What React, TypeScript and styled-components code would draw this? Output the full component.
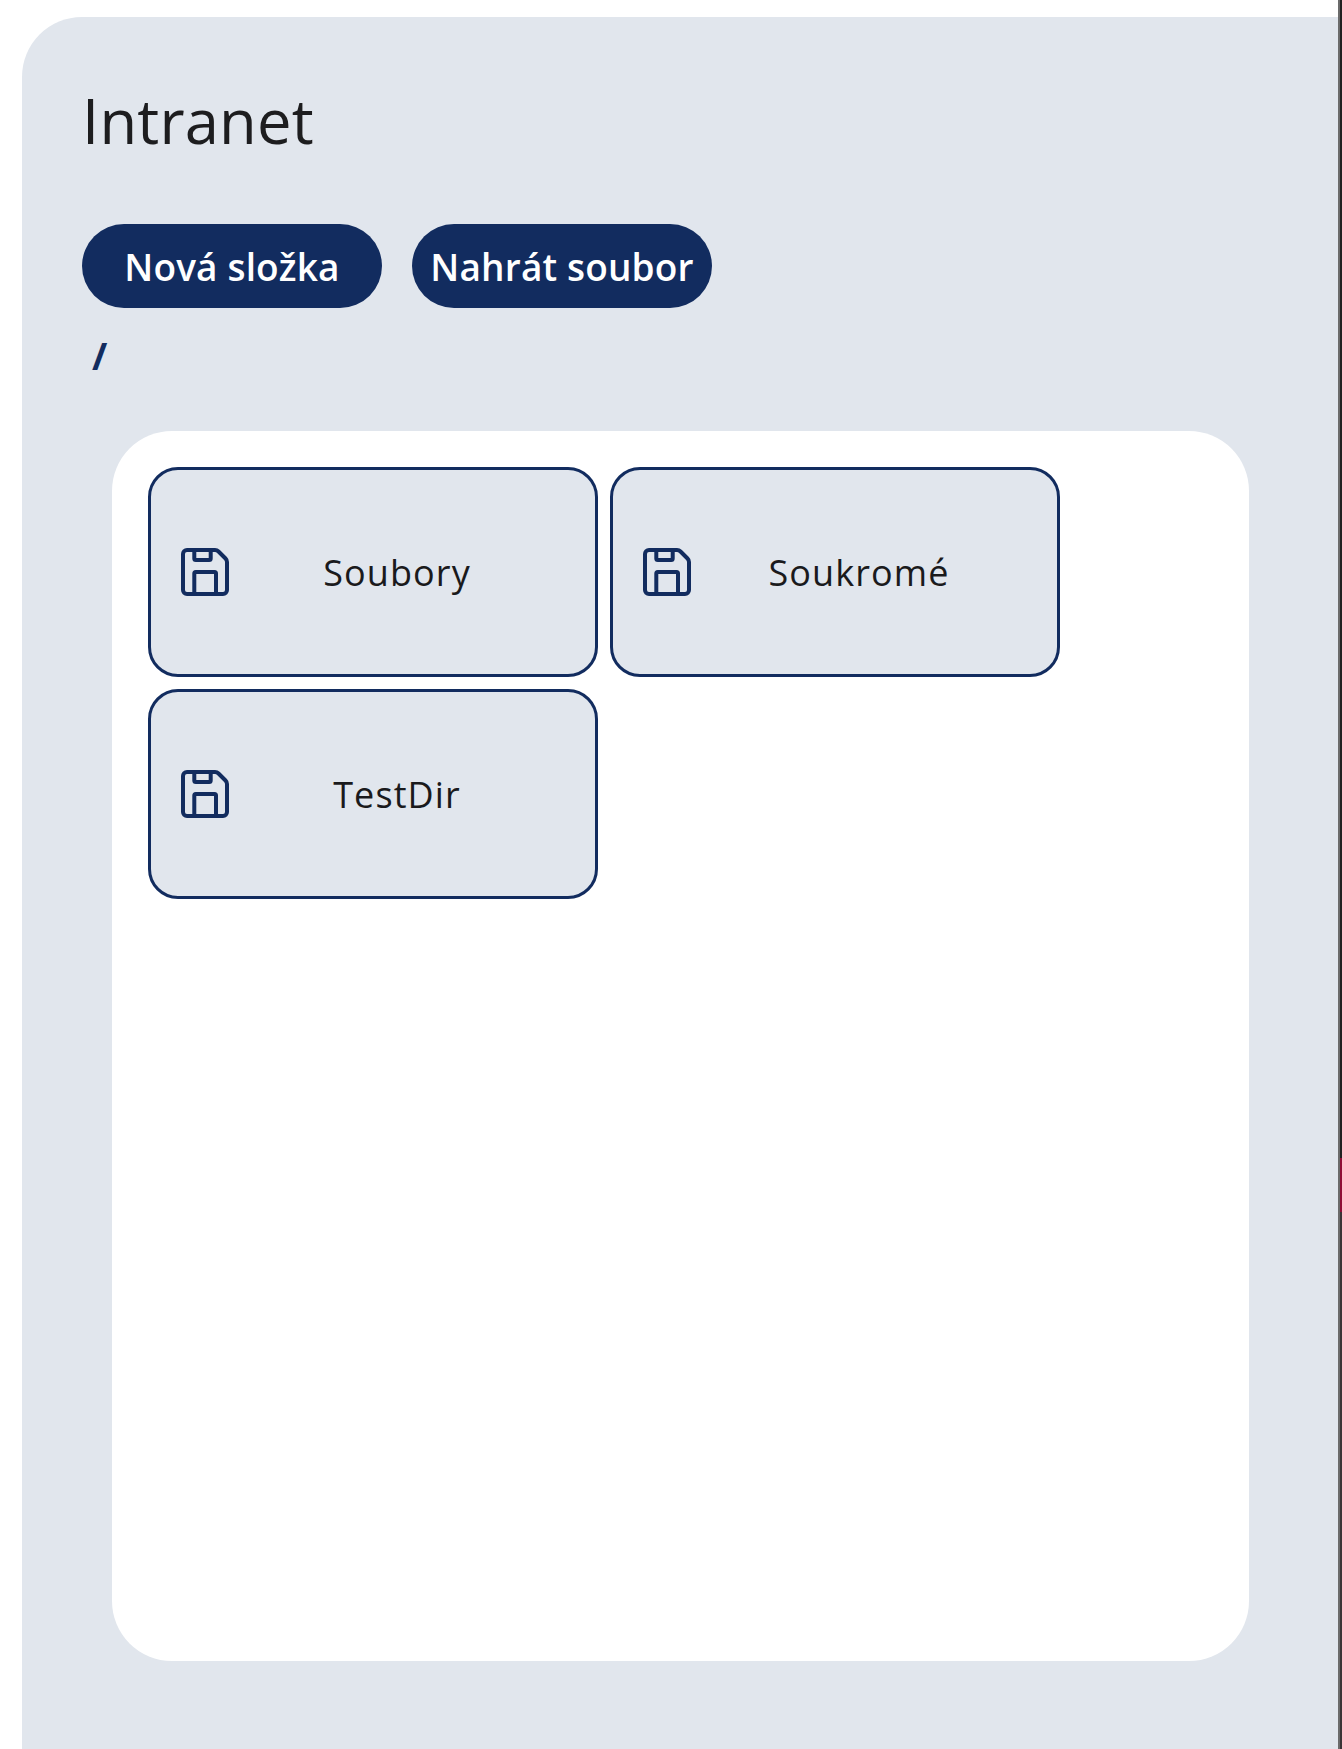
import React from 'react';
import styled, { createGlobalStyle } from 'styled-components';

const GlobalStyle = createGlobalStyle`
    html, body {
        margin: 0;
        padding: 0;
        background: #fff;
    }
    * {
        box-sizing: border-box;
    }
`

const folders = ['Soubory', 'Soukromé', 'TestDir'];

const FloppyIcon = () => (
    <svg width="48" height="48" viewBox="0 0 48 48" fill="none" stroke="#122c5f" strokeWidth="4" strokeLinejoin="round">
        <path d="M2 6a4 4 0 0 1 4-4h28a5 5 0 0 1 3.500 1.500l7 7a5 5 0 0 1 1.500 3.500V42a4 4 0 0 1-4 4H6a4 4 0 0 1-4-4z" />
        <path d="M13.300 2v8.500a1.500 1.500 0 0 0 1.500 1.500h13.400a1.500 1.500 0 0 0 1.500-1.500V2" />
        <path d="M13.300 46V25.500a1.500 1.500 0 0 1 1.500-1.500h18.700a1.500 1.500 0 0 1 1.500 1.500V46" />
    </svg>
);

export default function App() {
    return (
        <>
            <GlobalStyle />
            <Page>
                <Workspace>
                    <Panel>
                        <Title>Intranet</Title>
                        <Actions>
                            <ActionButton>Nová složka</ActionButton>
                            <ActionButton>Nahrát soubor</ActionButton>
                        </Actions>
                        <CurrentPath>/</CurrentPath>
                        <Browser>
                            {folders.map((name) => (
                                <FolderTile key={name}>
                                    <FloppyIcon />
                                    <FolderName>{name}</FolderName>
                                </FolderTile>
                            ))}
                        </Browser>
                    </Panel>
                </Workspace>
                <WindowEdge />
            </Page>
        </>
    );
}

const Page = styled.div`
    height: 1749px;
    overflow: hidden;
    display: flex;
    font-family: 'Open Sans', sans-serif;
`

const Workspace = styled.div`
    flex: 1;
    min-width: 0;
    display: flex;
    padding: 17px 0 0 22px;
`

const Panel = styled.main`
    flex: 1;
    min-width: 0;
    background: #e1e6ed;
    border-radius: 60px 0 0 0;
    padding: 73px 0 0 60px;
`

const Title = styled.h1`
    margin: 0;
    font-size: 61.5px;
    font-weight: 400;
    letter-spacing: 0.2px;
    line-height: 60px;
    color: #1d1d1f;
`

const Actions = styled.div`
    display: flex;
    gap: 30px;
    margin-top: 74px;
`

const ActionButton = styled.button`
    width: 300px;
    height: 84px;
    padding: 1px 0 0;
    border: none;
    border-radius: 42px;
    background: #122c5f;
    color: #fff;
    font-family: inherit;
    font-size: 37px;
    font-weight: 600;
    letter-spacing: 0.15px;
`

const CurrentPath = styled.div`
    margin: 18px 0 0 10px;
    height: 60px;
    font-size: 37px;
    font-weight: 700;
    line-height: 60px;
    color: #122c5f;
`

const Browser = styled.section`
    display: flex;
    flex-wrap: wrap;
    align-content: flex-start;
    gap: 12px;
    width: 1137px;
    height: 1230px;
    margin: 45px 0 0 30px;
    padding: 36px;
    border-radius: 60px;
    background: #fff;
`

const FolderTile = styled.div`
    display: flex;
    align-items: center;
    width: 450px;
    height: 210px;
    padding: 0 30px;
    border: 3px solid #122c5f;
    border-radius: 30px;
    background: #e1e6ed;
`

const FolderName = styled.span`
    flex: 1;
    text-align: center;
    font-size: 36px;
    letter-spacing: 1.1px;
    color: #1a1a1c;
`

const WindowEdge = styled.div`
    flex: none;
    width: 4px;
    border-left: 2px solid #6b6b6b;
    background: linear-gradient(#202020 0 1158px, #8e0e35 1158px 1212px, #3a3436 1212px);
`
